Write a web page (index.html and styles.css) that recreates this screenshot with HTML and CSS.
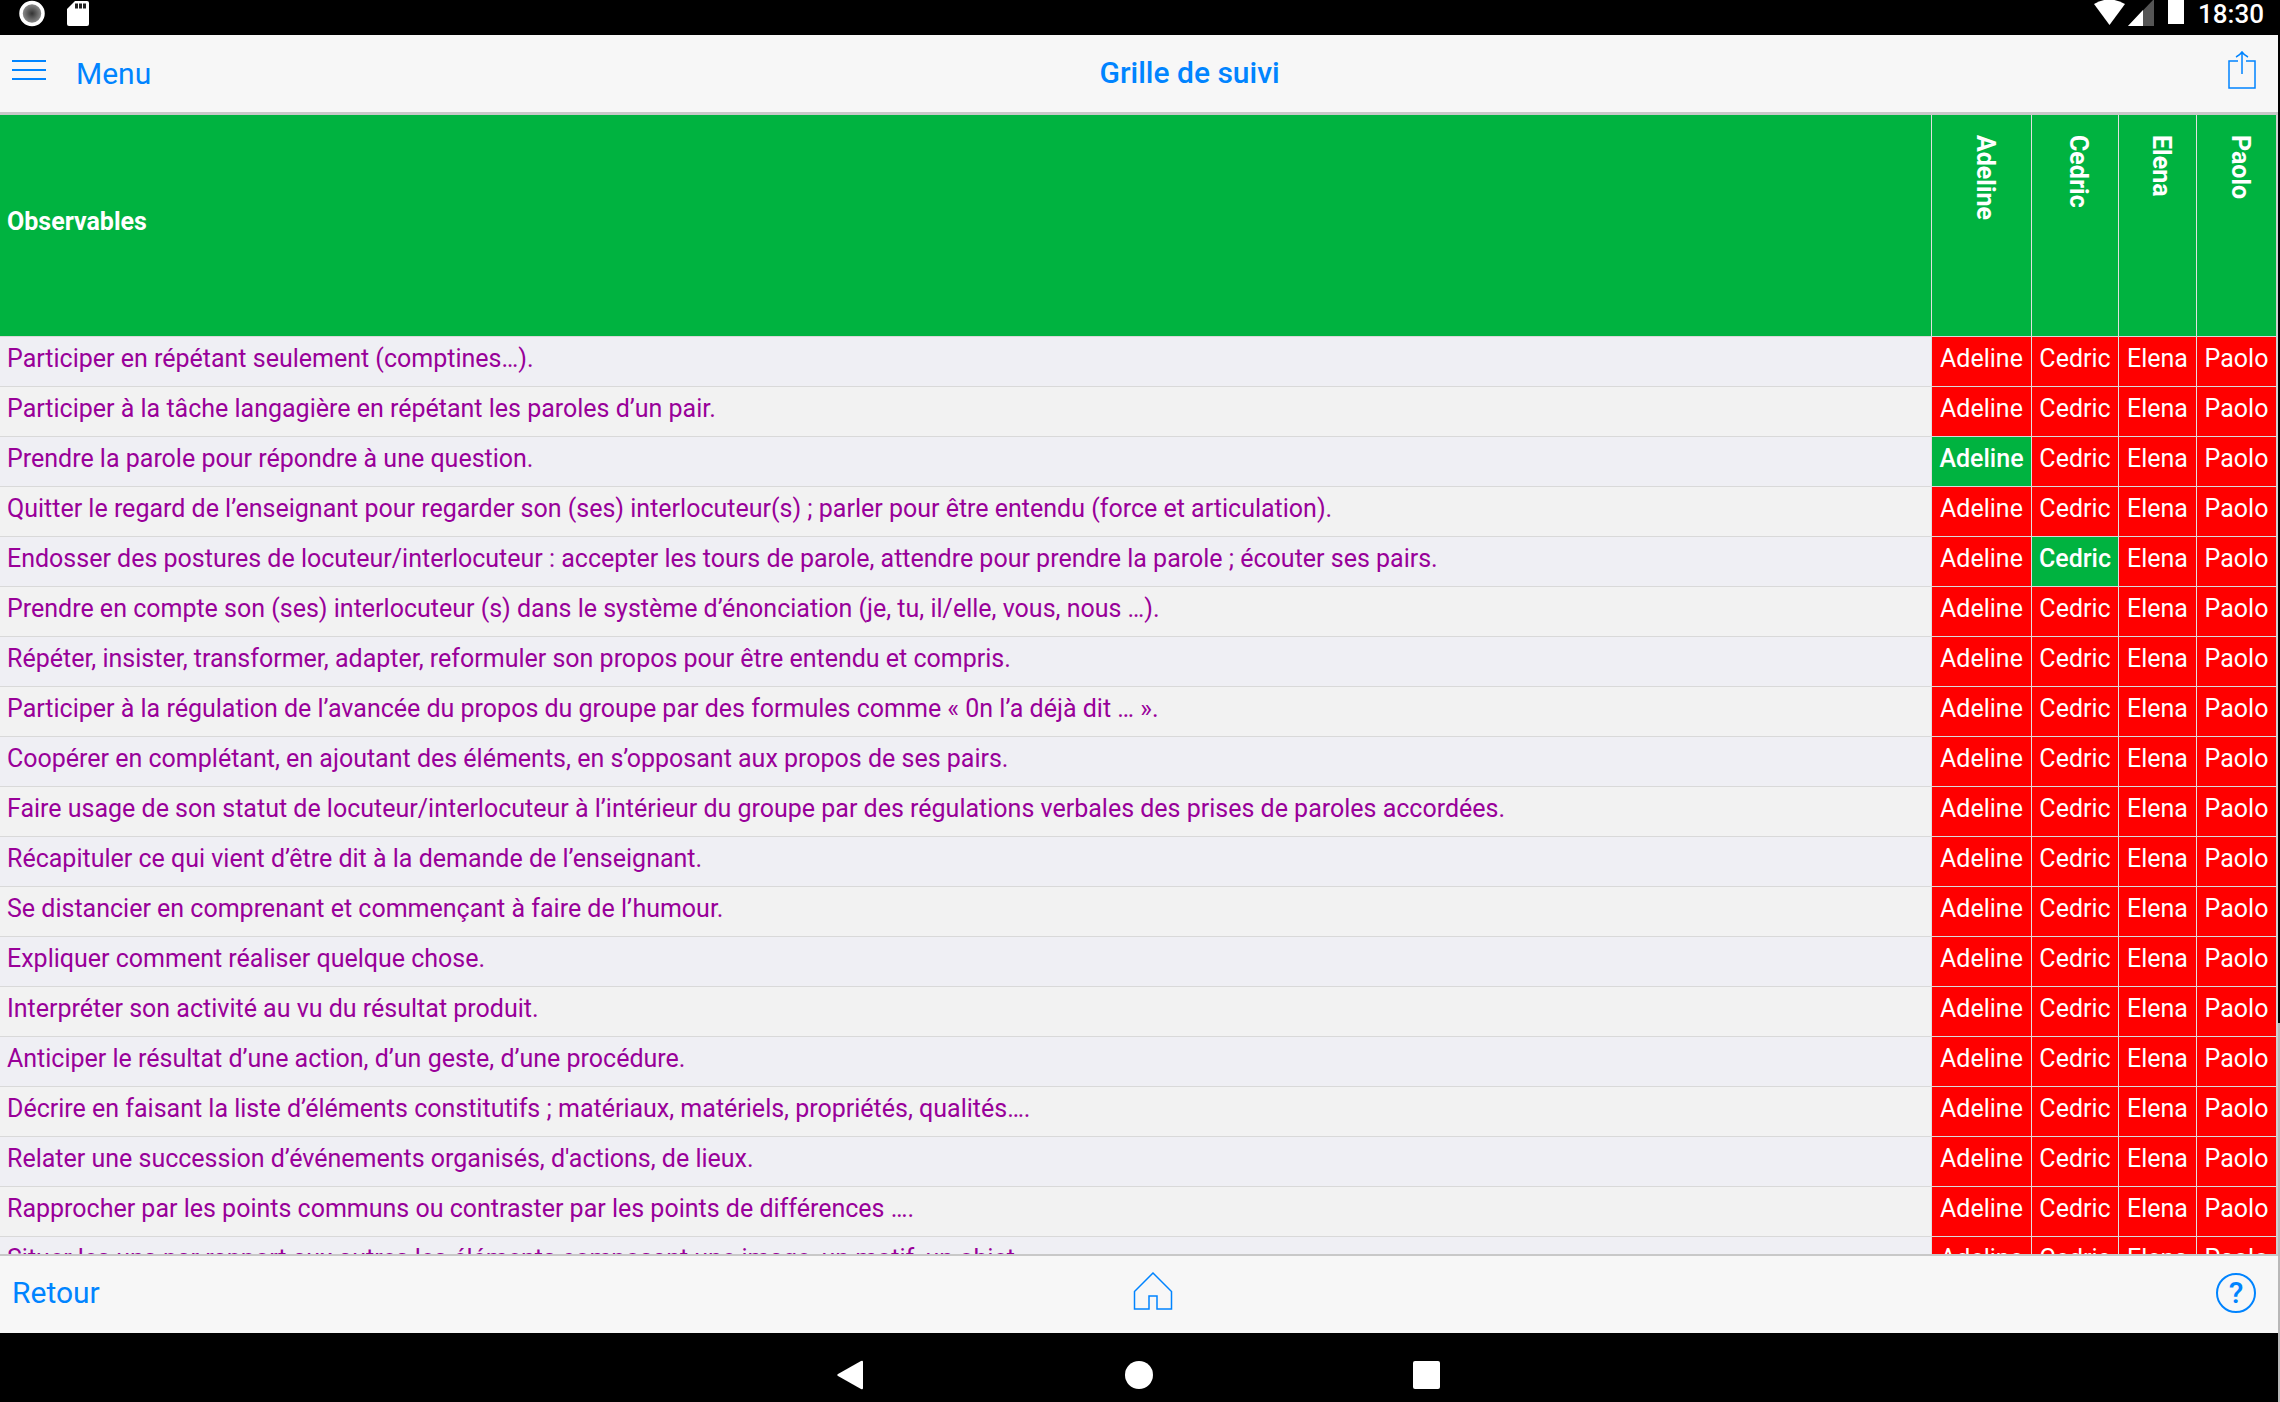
FILE: index.html
```html
<!DOCTYPE html>
<html lang="fr">
<head>
<meta charset="utf-8">
<meta name="viewport" content="width=device-width, initial-scale=1">
<title>Grille de suivi</title>
<link rel="stylesheet" href="styles.css">
</head>
<body>
<div class="device">
  <div class="status-bar">
    <div class="status-group">
      <svg class="status-record" viewBox="0 0 28 28" aria-hidden="true"><defs><radialGradient id="dot"><stop offset="0" stop-color="#333"/><stop offset="1" stop-color="#999"/></radialGradient></defs><circle cx="14" cy="13.500" r="11" fill="url(#dot)" stroke="#fff" stroke-width="3.500"/></svg>
      <svg class="status-card" viewBox="0 0 22 28" aria-hidden="true"><path d="M8 1h12q2 0 2 2v21q0 2-2 2H2q-2 0-2-2V9z" fill="#fff"/><path d="M8 3.500h3v5H8zM12 3.500h3v5h-3zM16 3.500h3v5h-3z" fill="#222"/></svg>
    </div>
    <div class="status-group">
      <svg class="status-signal" viewBox="0 0 92 28" aria-hidden="true"><path d="M0 4Q15-5 31 4L15.500 25z" fill="#fff"/><path d="M60-1v27H34z" fill="#555"/><path d="M49 10v16H34z" fill="#fff"/><path d="M74-1h16v25H74z" fill="#fff"/></svg>
      <time class="clock">18:30</time>
    </div>
  </div>

  <header class="bar bar-top">
    <button class="bar-button menu-button" type="button">
      <svg class="icon-menu" viewBox="0 0 34 22" aria-hidden="true"><path d="M0 2h34M0 11h34M0 20h34" fill="none" stroke="currentColor" stroke-width="2"/></svg>
      <span>Menu</span>
    </button>
    <h1 class="title">Grille de suivi</h1>
    <button class="bar-button" type="button" aria-label="Partager">
      <svg class="icon-share" viewBox="0 0 28 40" aria-hidden="true"><path d="M10 11H1v27h26V11h-9M14 24V2M8 7q4-2 6-5 2 3 6 5" fill="none" stroke="currentColor" stroke-width="1.500"/></svg>
    </button>
  </header>

  <main class="content">
    <table class="grid">
      <colgroup><col><col class="col-adeline"><col class="col-cedric"><col class="col-elena"><col class="col-paolo"></colgroup>
      <thead>
        <tr><th scope="col">Observables</th><th scope="col"><span class="name">Adeline</span></th><th scope="col"><span class="name">Cedric</span></th><th scope="col"><span class="name">Elena</span></th><th scope="col"><span class="name">Paolo</span></th></tr>
      </thead>
      <tbody>
        <tr><td>Participer en répétant seulement (comptines…).</td><td>Adeline</td><td>Cedric</td><td>Elena</td><td>Paolo</td></tr>
        <tr><td>Participer à la tâche langagière en répétant les paroles d’un pair.</td><td>Adeline</td><td>Cedric</td><td>Elena</td><td>Paolo</td></tr>
        <tr><td>Prendre la parole pour répondre à une question.</td><td class="done">Adeline</td><td>Cedric</td><td>Elena</td><td>Paolo</td></tr>
        <tr><td>Quitter le regard de l’enseignant pour regarder son (ses) interlocuteur(s) ; parler pour être entendu (force et articulation).</td><td>Adeline</td><td>Cedric</td><td>Elena</td><td>Paolo</td></tr>
        <tr><td>Endosser des postures de locuteur/interlocuteur : accepter les tours de parole, attendre pour prendre la parole ; écouter ses pairs.</td><td>Adeline</td><td class="done">Cedric</td><td>Elena</td><td>Paolo</td></tr>
        <tr><td>Prendre en compte son (ses) interlocuteur (s) dans le système d’énonciation (je, tu, il/elle, vous, nous …).</td><td>Adeline</td><td>Cedric</td><td>Elena</td><td>Paolo</td></tr>
        <tr><td>Répéter, insister, transformer, adapter, reformuler son propos pour être entendu et compris.</td><td>Adeline</td><td>Cedric</td><td>Elena</td><td>Paolo</td></tr>
        <tr><td>Participer à la régulation de l’avancée du propos du groupe par des formules comme « 0n l’a déjà dit … ».</td><td>Adeline</td><td>Cedric</td><td>Elena</td><td>Paolo</td></tr>
        <tr><td>Coopérer en complétant, en ajoutant des éléments, en s’opposant aux propos de ses pairs.</td><td>Adeline</td><td>Cedric</td><td>Elena</td><td>Paolo</td></tr>
        <tr><td>Faire usage de son statut de locuteur/interlocuteur à l’intérieur du groupe par des régulations verbales des prises de paroles accordées.</td><td>Adeline</td><td>Cedric</td><td>Elena</td><td>Paolo</td></tr>
        <tr><td>Récapituler ce qui vient d’être dit à la demande de l’enseignant.</td><td>Adeline</td><td>Cedric</td><td>Elena</td><td>Paolo</td></tr>
        <tr><td>Se distancier en comprenant et commençant à faire de l’humour.</td><td>Adeline</td><td>Cedric</td><td>Elena</td><td>Paolo</td></tr>
        <tr><td>Expliquer comment réaliser quelque chose.</td><td>Adeline</td><td>Cedric</td><td>Elena</td><td>Paolo</td></tr>
        <tr><td>Interpréter son activité au vu du résultat produit.</td><td>Adeline</td><td>Cedric</td><td>Elena</td><td>Paolo</td></tr>
        <tr><td>Anticiper le résultat d’une action, d’un geste, d’une procédure.</td><td>Adeline</td><td>Cedric</td><td>Elena</td><td>Paolo</td></tr>
        <tr><td>Décrire en faisant la liste d’éléments constitutifs ; matériaux, matériels, propriétés, qualités….</td><td>Adeline</td><td>Cedric</td><td>Elena</td><td>Paolo</td></tr>
        <tr><td>Relater une succession d’événements organisés, d'actions, de lieux.</td><td>Adeline</td><td>Cedric</td><td>Elena</td><td>Paolo</td></tr>
        <tr><td>Rapprocher par les points communs ou contraster par les points de différences ….</td><td>Adeline</td><td>Cedric</td><td>Elena</td><td>Paolo</td></tr>
        <tr><td>Situer les uns par rapport aux autres les éléments composant une image, un motif, un objet.</td><td>Adeline</td><td>Cedric</td><td>Elena</td><td>Paolo</td></tr>
      </tbody>
    </table>
  </main>

  <footer class="bar bar-bottom">
    <button class="bar-button" type="button">Retour</button>
    <button class="bar-button" type="button" aria-label="Accueil">
      <svg class="icon-home" viewBox="0 0 40 38" aria-hidden="true"><path d="M20 1L38.500 19.500V37H24V24h-8v13H1.500V19.500z" fill="none" stroke="currentColor" stroke-width="1.500"/></svg>
    </button>
    <button class="bar-button help" type="button" aria-label="Aide">?</button>
  </footer>

  <nav class="system-nav" aria-label="Système">
    <button class="system-button" type="button" aria-label="Précédent"><svg viewBox="0 0 28 30" aria-hidden="true"><path d="M26 2v26q0 2-2 1L1 16q-1.500-1 0-2L24 1q2-1 2 1z" fill="#fff"/></svg></button>
    <button class="system-button" type="button" aria-label="Écran d’accueil"><svg viewBox="0 0 28 30" aria-hidden="true"><circle cx="14" cy="15" r="14" fill="#fff"/></svg></button>
    <button class="system-button" type="button" aria-label="Applications récentes"><svg viewBox="0 0 28 30" aria-hidden="true"><rect x="0" y="1" width="27" height="28" rx="2" fill="#fff"/></svg></button>
  </nav>
</div>
</body>
</html>
```

FILE: styles.css
```css
* {
  box-sizing: border-box;
}

body {
  margin: 0;
  font-family: Roboto, "Liberation Sans", sans-serif;
  font-size: 25px;
}

.device {
  display: flex;
  flex-direction: column;
  height: 100vh;
  padding-right: 2px;
  overflow: hidden;
  background: linear-gradient(#000 73%, #b8b8b8 73%);
}

.status-bar {
  display: flex;
  flex: none;
  justify-content: space-between;
  height: 35px;
  padding: 0 14px 0 18px;
  background: #000;
  color: #fff;
}

.status-group {
  display: flex;
  align-items: flex-start;
}

.status-record {
  width: 28px;
  height: 28px;
  margin-right: 21px;
}

.status-card {
  width: 22px;
  height: 28px;
}

.status-signal {
  width: 92px;
  height: 28px;
  margin-right: 12px;
}

.clock {
  font-size: 26px;
  font-weight: 500;
  line-height: 28px;
}

.bar {
  display: flex;
  flex: none;
  align-items: center;
  justify-content: space-between;
  background: #f7f7f7;
  color: #0084ff;
}

.bar-top {
  height: 80px;
  padding: 0 22px 0 12px;
  border-bottom: 3px solid #c8c8c8;
}

.bar-bottom {
  height: 79px;
  padding: 0 22px 4px 12px;
  border-top: 2px solid #c8c8c8;
}

.bar-button {
  display: flex;
  align-items: center;
  padding: 0;
  border: 0;
  background: none;
  color: #0084ff;
  font: inherit;
  font-size: 30px;
  line-height: 36px;
}

.menu-button {
  gap: 30px;
}

.icon-menu {
  width: 34px;
  height: 22px;
  margin-bottom: 8px;
}

.icon-share {
  width: 28px;
  height: 40px;
  margin-bottom: 8px;
}

.icon-home {
  width: 40px;
  height: 38px;
  margin: 0 10px 4px 0;
}

.help {
  justify-content: center;
  width: 40px;
  height: 40px;
  border: 2px solid #0084ff;
  border-radius: 50%;
  font-weight: 500;
}

.title {
  margin: 0;
  padding-bottom: 2px;
  font-size: 30px;
  font-weight: 500;
  line-height: 36px;
}

.content {
  flex: 1;
  min-height: 0;
  overflow: hidden;
}

.grid {
  width: 100%;
  border-spacing: 0;
  border-right: 2px solid #d0d0d0;
  table-layout: fixed;
}

.col-adeline {
  width: 100px;
}

.col-cedric {
  width: 87px;
}

.col-elena {
  width: 78px;
}

.col-paolo {
  width: 80px;
}

.grid th,
.grid td {
  border-bottom: 1px solid #d9d9d9;
  white-space: nowrap;
}

.grid th + th,
.grid td + td {
  border-left: 1px solid #e0e0e0;
}

.grid th {
  height: 222px;
  padding: 0 7px 8px;
  background: #00b340;
  color: #fff;
  font-weight: 700;
  text-align: left;
}

.grid th + th {
  padding: 20px 0 0 6px;
  vertical-align: top;
}

.name {
  display: block;
  margin: 0 auto;
  line-height: 30px;
  writing-mode: vertical-rl;
}

.grid td {
  height: 50px;
  padding: 0 7px 5px;
  background: #efeff4;
  color: #990099;
  line-height: 30px;
}

.grid tr:nth-child(even) td:first-child {
  background: #f2f2f2;
}

.grid td + td {
  padding: 0 0 5px;
  background: #f00;
  color: #fff;
  text-align: center;
}

.grid td + .done {
  background: #00b340;
  font-weight: 500;
}

.system-nav {
  display: flex;
  flex: none;
  align-items: center;
  justify-content: center;
  gap: 260px;
  height: 69px;
  padding-top: 14px;
  background: #000;
}

.system-button {
  width: 28px;
  height: 30px;
  padding: 0;
  border: 0;
  background: none;
}

.system-button svg {
  display: block;
  width: 28px;
  height: 30px;
}
```
